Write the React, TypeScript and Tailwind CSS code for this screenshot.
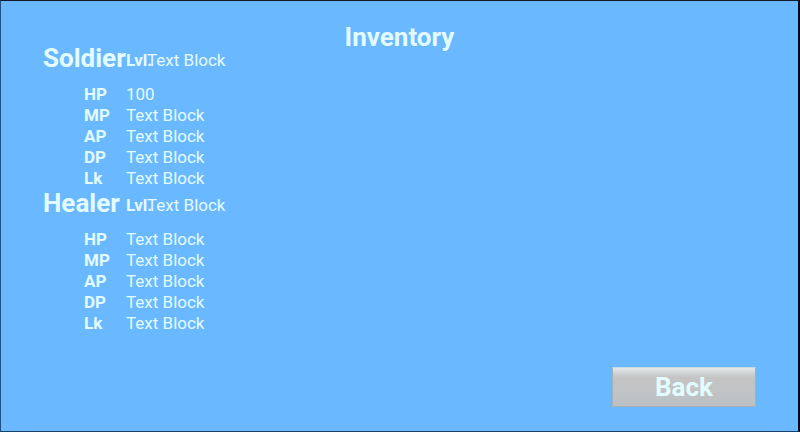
import React from "react";

type Stat = { label: string; value: string };
type Member = { name: string; level: string; stats: Stat[] };

const party: Member[] = [
  {
    name: "Soldier",
    level: "Text Block",
    stats: [
      { label: "HP", value: "100" },
      { label: "MP", value: "Text Block" },
      { label: "AP", value: "Text Block" },
      { label: "DP", value: "Text Block" },
      { label: "Lk", value: "Text Block" },
    ],
  },
  {
    name: "Healer",
    level: "Text Block",
    stats: [
      { label: "HP", value: "Text Block" },
      { label: "MP", value: "Text Block" },
      { label: "AP", value: "Text Block" },
      { label: "DP", value: "Text Block" },
      { label: "Lk", value: "Text Block" },
    ],
  },
];

function MemberPanel({ member }: { member: Member }) {
  return (
    <section>
      <header className="flex h-10 items-start">
        <h2 className="w-[83px] shrink-0 text-[26px] leading-7 font-bold whitespace-nowrap">
          {member.name}
        </h2>
        <p className="flex text-[17px] leading-8 whitespace-nowrap">
          <span className="w-[21px] font-bold">Lvl.</span>
          <span>{member.level}</span>
        </p>
      </header>
      <dl className="ml-[41px] grid grid-cols-[42px_auto] text-[17px] leading-[21px]">
        {member.stats.map((stat) => (
          <React.Fragment key={stat.label}>
            <dt className="font-bold">{stat.label}</dt>
            <dd>{stat.value}</dd>
          </React.Fragment>
        ))}
      </dl>
    </section>
  );
}

export default function App() {
  return (
    <main className="grid min-h-screen grid-cols-[1fr_auto_1fr] border border-r-2 border-t-[#101c2c] border-r-[#000a18] border-b-[#174066] border-l-[#234f80] bg-[#6ab8ff] font-['Roboto',sans-serif] text-[#e2fcff]">
      <div className="pt-[43px] pl-[42px]">
        {party.map((member) => (
          <MemberPanel key={member.name} member={member} />
        ))}
      </div>
      <h1 className="pt-5 text-[26px] leading-8 font-bold">Inventory</h1>
      <div className="flex items-end justify-end pr-[42px] pb-6">
        <button
          type="button"
          className="h-10 w-36 border border-[#a3b0b9] border-t-[#c5dbe8] bg-[#c4c4c4] bg-linear-to-b from-[#e2e6e8] from-0% via-[#c4c4c4] via-25% to-[#bdc1c4] text-[26px] leading-8 font-bold"
        >
          Back
        </button>
      </div>
    </main>
  );
}
